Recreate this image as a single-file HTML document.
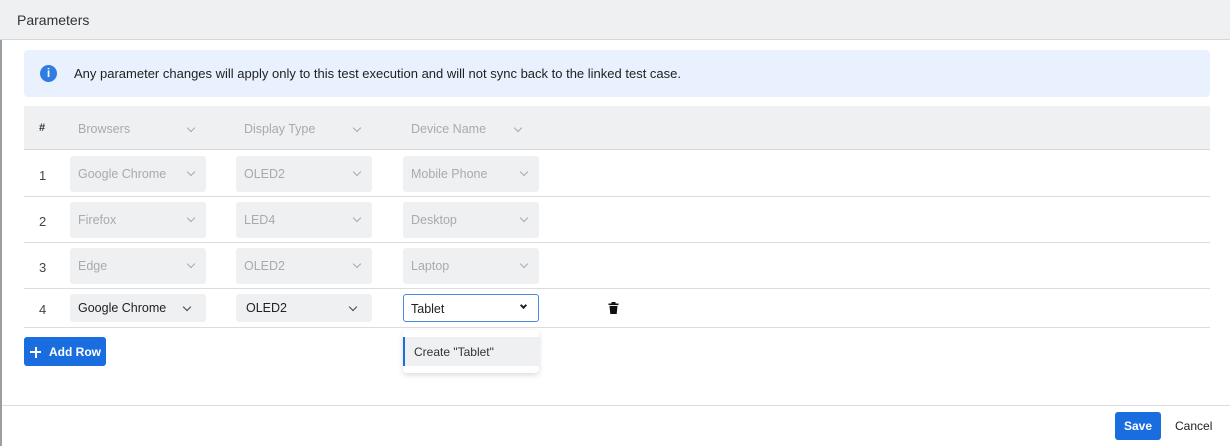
<!DOCTYPE html>
<html><head><style>
*{box-sizing:border-box;margin:0;padding:0}
body{width:1230px;height:446px;background:#fff;font-family:"Liberation Sans",sans-serif;font-size:13px;color:#222;position:relative;overflow:hidden}
.abs{position:absolute}
.hdr{left:0;top:0;width:1230px;height:40px;background:#eff0f2;border-bottom:1px solid #d6d7d9}
.hdr span{position:absolute;left:17px;top:12px;font-size:14px;color:#333}
.edge{left:0;top:40px;width:2px;height:406px;background:#9a9da2}
.banner{left:24px;top:50px;width:1186px;height:47px;background:#e8f1fd;border-radius:4px}
.banner .ic{position:absolute;left:16px;top:15px;width:17px;height:17px;border-radius:50%;background:#2f7de1;color:#fff;font-weight:bold;font-size:12px;text-align:center;line-height:17px}
.banner span{position:absolute;left:50px;top:16px;color:#222}
.th{left:24px;top:106px;width:1186px;height:44px;background:#eff0f2;border-bottom:1px solid #d8d8d8}
.line{left:24px;width:1186px;height:1px;background:#dcdcdc}
.sel{position:absolute;width:136px;height:36px;background:#eff0f2;border-radius:3px;color:#aaa;padding:11px 8px;font-size:12.5px}
.sel i{position:absolute;right:12px;top:13px;width:6px;height:6px;border-right:1.3px solid #aaa;border-bottom:1.3px solid #aaa;transform:rotate(45deg)}
.hl{position:absolute;color:#aaa;top:122px;font-size:12.5px}
.num{position:absolute;left:39px;color:#444}
.a{color:#222}.a i{border-color:#444}
</style></head><body>
<div class="abs hdr"><span>Parameters</span></div>
<div class="abs edge"></div>
<div class="abs banner"><div class="ic">i</div><span>Any parameter changes will apply only to this test execution and will not sync back to the linked test case.</span></div>
<div class="abs th"></div>
<div class="abs" style="left:39px;top:122px;font-weight:bold;font-size:11px;color:#333">#</div>
<div class="hl" style="left:78px">Browsers</div><div class="sel" style="left:70px;top:112px;background:none"><i></i></div>
<div class="hl" style="left:244px">Display Type</div><div class="sel" style="left:236px;top:112px;background:none"><i></i></div>
<div class="hl" style="left:411px">Device Name</div><div class="sel" style="left:403px;top:112px;background:none;width:130px"><i></i></div>

<div class="num" style="top:168px">1</div>
<div class="sel" style="left:70px;top:156px">Google Chrome<i></i></div>
<div class="sel" style="left:236px;top:156px">OLED2<i></i></div>
<div class="sel" style="left:403px;top:156px">Mobile Phone<i></i></div>
<div class="abs line" style="top:196px"></div>
<div class="num" style="top:214px">2</div>
<div class="sel" style="left:70px;top:202px">Firefox<i></i></div>
<div class="sel" style="left:236px;top:202px">LED4<i></i></div>
<div class="sel" style="left:403px;top:202px">Desktop<i></i></div>
<div class="abs line" style="top:242px"></div>
<div class="num" style="top:260px">3</div>
<div class="sel" style="left:70px;top:248px">Edge<i></i></div>
<div class="sel" style="left:236px;top:248px">OLED2<i></i></div>
<div class="sel" style="left:403px;top:248px">Laptop<i></i></div>
<div class="abs line" style="top:288px"></div>
<div class="num" style="top:302px">4</div>
<div class="sel a" style="left:70px;top:294px;height:28px;padding:7px 8px">Google Chrome<i style="top:10px;right:16px"></i></div>
<div class="sel a" style="left:236px;top:294px;height:28px;padding:7px 10px">OLED2<i style="top:10px;right:16px"></i></div>
<div class="sel a" style="left:403px;top:294px;height:28px;padding:7px 7px;background:#fff;border:1.5px solid #4a8ae6">Tablet<i style="top:8px;right:12px;border-width:2px;width:5px;height:5px;border-color:#222"></i></div>
<svg class="abs" style="left:608px;top:302px" width="11" height="12" viewBox="0 0 11 12"><rect x="0.5" y="1.5" width="10" height="1.6" fill="#111"/><rect x="3.5" y="0" width="4" height="2" fill="#111"/><path d="M1.5 4h8l-0.8 8h-6.4z" fill="#111"/></svg>
<div class="abs line" style="top:327px"></div>
<div class="abs" style="left:24px;top:337px;width:82px;height:29px;background:#1a6ddf;border-radius:3px;color:#fff;font-weight:bold;font-size:12px;padding:8px 0 0 25px">Add Row</div>
<div class="abs" style="left:30px;top:351px;width:11px;height:2px;background:#fff"></div>
<div class="abs" style="left:34.5px;top:346.5px;width:2px;height:11px;background:#fff"></div>
<div class="abs" style="left:403px;top:330px;width:136px;height:43px;background:#fff;border-radius:4px;box-shadow:0 2px 6px rgba(0,0,0,.15)"></div>
<div class="abs" style="left:403px;top:337px;width:136px;height:29px;background:#eff0f2;border-left:2px solid #1a6ddf;padding:8px 0 0 9px;font-size:12px;color:#333">Create "Tablet"</div>
<div class="abs" style="left:2px;top:405px;width:1228px;height:1px;background:#dcdcdc"></div>
<div class="abs" style="left:1115px;top:412px;width:46px;height:28px;background:#1a6ddf;border-radius:3px;color:#fff;font-weight:bold;font-size:12px;text-align:center;line-height:28px">Save</div>
<div class="abs" style="left:1175px;top:419px;font-size:12px;color:#222">Cancel</div>
</body></html>
